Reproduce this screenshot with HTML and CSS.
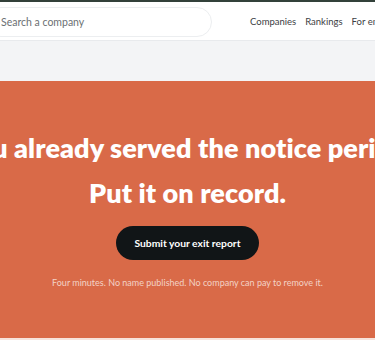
FILE: index.html
```html
<!DOCTYPE html>
<html lang="en">
<head>
    <meta charset="UTF-8">
    <meta name="viewport" content="width=device-width, initial-scale=1.0">
    <title>Exit Reports</title>
    <link rel="stylesheet" href="styles.css">
</head>
<body>
    <div class="topline"></div>
    <header class="site-header">
        <div class="search">
            <input type="text" placeholder="Search a company">
        </div>
        <nav class="nav">
            <a href="#">Companies</a>
            <a href="#">Rankings</a>
            <a href="#">For employers</a>
        </nav>
    </header>

    <div class="spacer"></div>

    <section class="cta">
        <div class="cta-line"><h2>You already served the notice period.</h2></div>
        <div class="cta-line"><h2>Put it on record.</h2></div>
        <button class="cta-button">Submit your exit report</button>
        <p class="cta-note">Four minutes. No name published. No company can pay to remove it.</p>
    </section>

    <footer class="site-footer"></footer>
</body>
</html>
```

FILE: styles.css
```css
* {
    margin: 0;
    padding: 0;
    box-sizing: border-box;
    font-family: 'Lato', 'Open Sans', sans-serif;
}

body {
    width: 375px;
    overflow: hidden;
    background: #f3f4f6;
}

.topline {
    height: 2px;
    background: #33413a;
}

.site-header {
    height: 39px;
    display: flex;
    align-items: center;
    background: #fff;
    border-bottom: 1px solid #e8eaed;
    overflow: hidden;
}

.search {
    flex: 0 0 auto;
    margin-left: -14px;
    width: 226px;
}

.search input {
    width: 100%;
    height: 30px;
    margin-top: 1px;
    padding: 0 14px;
    border: 1px solid #eceef0;
    border-radius: 999px;
    font-size: 10.5px;
    color: #333;
    outline: none;
}

.search input::placeholder {
    color: #6b6f73;
}

.nav {
    display: flex;
    gap: 9px;
    margin-left: 38px;
    white-space: nowrap;
}

.nav a {
    font-size: 9.5px;
    color: #3c4043;
    text-decoration: none;
}

.spacer {
    height: 40px;
    background: #f3f4f6;
}

.cta {
    height: 257px;
    background: #d96a48;
    display: flex;
    flex-direction: column;
    align-items: center;
    padding-top: 44px;
}

.cta-line {
    width: 100%;
    display: flex;
    justify-content: center;
    height: 45px;
    align-items: center;
}

.cta-line h2 {
    flex: 0 0 auto;
    white-space: nowrap;
    color: #fff;
    font-size: 27px;
    font-weight: 800;
    letter-spacing: 0.1px;
}

.cta-button {
    margin-top: 11px;
    height: 34px;
    padding: 0 18px;
    border: none;
    border-radius: 999px;
    background: #111517;
    color: #fff;
    font-size: 10.3px;
    font-weight: 700;
}

.cta-note {
    margin-top: 17px;
    font-size: 9px;
    color: #f3d2c6;
}

.site-footer {
    height: 10px;
    background: #f7e3dc;
}
```
